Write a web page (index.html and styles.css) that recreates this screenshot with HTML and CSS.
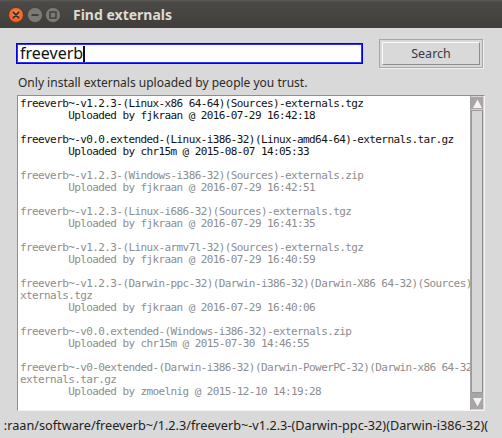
FILE: index.html
```html
<!DOCTYPE html>
<html>
<head>
<meta charset="utf-8">
<link rel="stylesheet" href="styles.css">
</head>
<body>
<div class="window">
  <div class="titlebar">
    <div class="wbtns">
      <svg class="wbtn" width="16" height="16" viewBox="0 0 16 16">
        <defs>
          <radialGradient id="go" cx="50%" cy="40%" r="60%">
            <stop offset="0" stop-color="#f58a4e"/>
            <stop offset="1" stop-color="#e2591f"/>
          </radialGradient>
        </defs>
        <circle cx="8" cy="8" r="7.5" fill="url(#go)" stroke="#4a2a18" stroke-width="0.6"/>
        <path d="M5.4 5.4 L10.6 10.6 M10.6 5.4 L5.4 10.6" stroke="#3a3030" stroke-width="1.8" stroke-linecap="round"/>
      </svg>
      <svg class="wbtn" width="16" height="16" viewBox="0 0 16 16">
        <circle cx="8" cy="8" r="7.5" fill="#7b7a75" stroke="#3a3935" stroke-width="0.6"/>
        <path d="M4.5 8 H11.5" stroke="#3d3c38" stroke-width="1.8"/>
      </svg>
      <svg class="wbtn" width="16" height="16" viewBox="0 0 16 16">
        <circle cx="8" cy="8" r="7.5" fill="#7b7a75" stroke="#3a3935" stroke-width="0.6"/>
        <rect x="5" y="5" width="6" height="6" fill="none" stroke="#3d3c38" stroke-width="1.4"/>
      </svg>
    </div>
    <div class="title">Find externals</div>
  </div>
  <div class="content">
    <div class="searchrow">
      <div class="entry"><span class="entrytext">freeverb</span><span class="caret"></span></div>
      <div class="btn"><div class="btninner">Search</div></div>
    </div>
    <div class="hint">Only install externals uploaded by people you trust.</div>
    <div class="listbox">
      <div class="listtext">
        <div class="item">
          <div class="line">freeverb~-v1.2.3-(Linux-x86 64-64)(Sources)-externals.tgz</div>
          <div class="line">        Uploaded by fjkraan @ 2016-07-29 16:42:18</div>
        </div>
        <div class="item">
          <div class="line">freeverb~-v0.0.extended-(Linux-i386-32)(Linux-amd64-64)-externals.tar.gz</div>
          <div class="line">        Uploaded by chr15m @ 2015-08-07 14:05:33</div>
        </div>
        <div class="item dim">
          <div class="line">freeverb~-v1.2.3-(Windows-i386-32)(Sources)-externals.zip</div>
          <div class="line">        Uploaded by fjkraan @ 2016-07-29 16:42:51</div>
        </div>
        <div class="item dim">
          <div class="line">freeverb~-v1.2.3-(Linux-i686-32)(Sources)-externals.tgz</div>
          <div class="line">        Uploaded by fjkraan @ 2016-07-29 16:41:35</div>
        </div>
        <div class="item dim">
          <div class="line">freeverb~-v1.2.3-(Linux-armv7l-32)(Sources)-externals.tgz</div>
          <div class="line">        Uploaded by fjkraan @ 2016-07-29 16:40:59</div>
        </div>
        <div class="item dim">
          <div class="line">freeverb~-v1.2.3-(Darwin-ppc-32)(Darwin-i386-32)(Darwin-X86 64-32)(Sources)-</div>
          <div class="line">xternals.tgz</div>
          <div class="line">        Uploaded by fjkraan @ 2016-07-29 16:40:06</div>
        </div>
        <div class="item dim">
          <div class="line">freeverb~-v0.0.extended-(Windows-i386-32)-externals.zip</div>
          <div class="line">        Uploaded by chr15m @ 2015-07-30 14:46:55</div>
        </div>
        <div class="item dim">
          <div class="line">freeverb~-v0-0extended-(Darwin-i386-32)(Darwin-PowerPC-32)(Darwin-x86 64-32</div>
          <div class="line">externals.tar.gz</div>
          <div class="line">        Uploaded by zmoelnig @ 2015-12-10 14:19:28</div>
        </div>
      </div>
      <div class="scrollbar">
        <div class="arrow up">
          <svg width="11" height="11" viewBox="0 0 11 11"><path d="M5.5 1.5 L10 10 L1 10 Z" fill="#f4f4f4"/></svg>
        </div>
        <div class="thumb"></div>
        <div class="arrow down">
          <svg width="11" height="11" viewBox="0 0 11 11"><path d="M1 1 L10 1 L5.5 9.5 Z" fill="#f4f4f4"/></svg>
        </div>
      </div>
    </div>
  </div>
  <div class="status"><span class="statustext">:raan/software/freeverb~/1.2.3/freeverb~-v1.2.3-(Darwin-ppc-32)(Darwin-i386-32)(</span></div>
</div>
</body>
</html>
```
FILE: styles.css
```css
* { box-sizing: border-box; }
html, body {
  margin: 0;
  padding: 0;
  width: 502px;
  height: 438px;
  overflow: hidden;
  background: #d9d9d9;
}
.window {
  width: 502px;
  height: 438px;
  display: flex;
  flex-direction: column;
  background: #d9d9d9;
}
.titlebar {
  height: 28px;
  flex: none;
  display: flex;
  align-items: center;
  background: linear-gradient(#5c5b56 0px, #4b4a46 2px, #3f3e3a 100%);
  padding-left: 8px;
}
.wbtns {
  display: flex;
  gap: 2.5px;
  margin-top: 2px;
}
.wbtn { display: block; }
.title {
  margin-left: 12px;
  font-family: "Noto Sans", "DejaVu Sans", sans-serif;
  font-weight: bold;
  font-size: 14px;
  color: #dfdbd2;
  margin-top: 1px;
}
.content {
  flex: none;
  display: flex;
  flex-direction: column;
  padding-left: 16px;
}
.searchrow {
  margin-top: 11px;
  height: 29px;
  display: flex;
  align-items: center;
}
.entry {
  width: 347px;
  height: 21px;
  border: 1px solid #0000e8;
  box-shadow: inset 0 0 0 1px #3030ff;
  background: #ffffff;
  display: flex;
  align-items: center;
  padding-left: 3px;
  font-family: "Noto Sans", sans-serif;
  font-size: 16px;
  color: #111;
}
.entrytext { line-height: 19px; }
.caret {
  width: 2px;
  height: 16px;
  background: #111;
}
.btn {
  margin-left: 16px;
  width: 104px;
  height: 29px;
  border: 1px solid #a6a6a6;
  box-shadow: 1px 1px 0 #f2f2f2;
  padding: 2px;
  display: flex;
}
.btninner {
  flex: 1;
  border: 1px solid #fafafa;
  border-right-color: #8e8e8e;
  border-bottom-color: #8e8e8e;
  display: flex;
  align-items: center;
  justify-content: center;
  font-family: "Noto Sans", sans-serif;
  font-size: 12.5px;
  color: #3a3a44;
}
.hint {
  margin-top: 7px;
  margin-left: 2px;
  height: 16px;
  line-height: 16px;
  font-family: "Noto Sans", sans-serif;
  font-size: 12px;
  color: #2a2a2a;
}
.listbox {
  margin-top: 4px;
  margin-left: 1px;
  width: 468px;
  height: 316px;
  border: 1px solid #8e8e8e;
  border-right-color: #f4f4f4;
  border-bottom-color: #f4f4f4;
  display: flex;
  background: #ffffff;
}
.listtext {
  flex: 1;
  min-width: 0;
  overflow: hidden;
  padding: 2px 0 0 2px;
  font-family: "DejaVu Sans Mono", monospace;
  font-size: 11px;
  letter-spacing: -0.6px;
  color: #111;
}
.item { margin-bottom: 12px; }
.item.dim { color: #8d8d8d; }
.line {
  height: 12px;
  line-height: 12px;
  white-space: pre;
}
.scrollbar {
  width: 14px;
  flex: none;
  background: #d3d3d3;
  border-left: 1px solid #a5a5a5;
  display: flex;
  flex-direction: column;
  padding: 1px 1px 1px 0;
}
.arrow {
  height: 12px;
  flex: none;
  background: #aaa4a4;
  display: flex;
  align-items: center;
  justify-content: center;
}
.arrow svg { display: block; }
.thumb {
  flex: 1;
  margin-top: 1px;
  background: #d6d6d6;
  border: 1px solid #9a9a9a;
  border-right-color: #8a8a8a;
}
.arrow.down {
  height: 16px;
  align-items: flex-end;
  padding-bottom: 1px;
}
.status {
  flex: none;
  width: 488px;
  height: 20px;
  margin-top: 4px;
  overflow: hidden;
  direction: rtl;
  white-space: nowrap;
  font-family: "Noto Sans", sans-serif;
  font-size: 12.7px;
  line-height: 20px;
  color: #222;
}
.statustext {
  direction: ltr;
  unicode-bidi: isolate;
}
```
